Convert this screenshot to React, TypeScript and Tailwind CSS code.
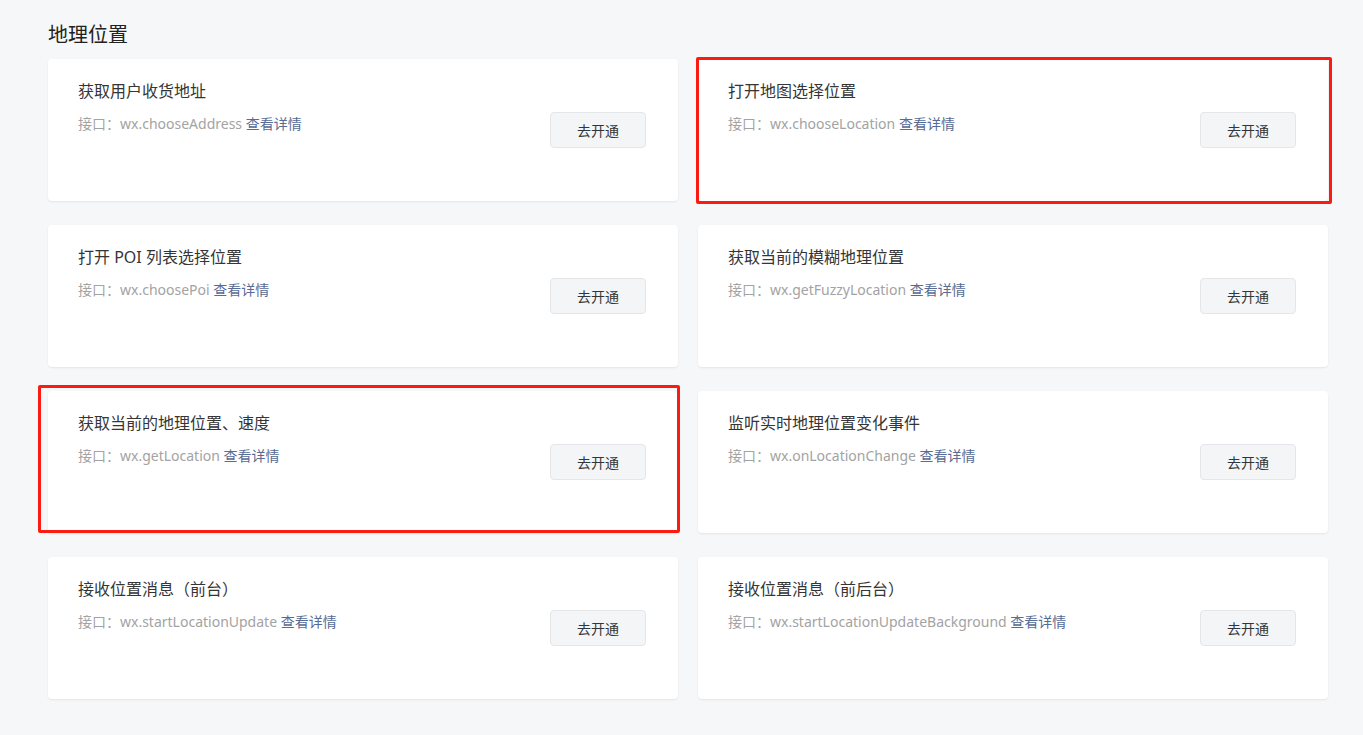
const font = { fontFamily: '"Noto Sans", "Noto Sans CJK SC", sans-serif' };

interface Api {
  title: string;
  api: string;
  mark?: "right" | "left";
}

const apis: Api[] = [
  { title: "获取用户收货地址", api: "wx.chooseAddress" },
  { title: "打开地图选择位置", api: "wx.chooseLocation", mark: "right" },
  { title: "打开 POI 列表选择位置", api: "wx.choosePoi" },
  { title: "获取当前的模糊地理位置", api: "wx.getFuzzyLocation" },
  { title: "获取当前的地理位置、速度", api: "wx.getLocation", mark: "left" },
  { title: "监听实时地理位置变化事件", api: "wx.onLocationChange" },
  { title: "接收位置消息（前台）", api: "wx.startLocationUpdate" },
  { title: "接收位置消息（前后台）", api: "wx.startLocationUpdateBackground" },
];

function ApiCard({ item }: { item: Api }) {
  return (
    <div className="relative flex h-[142px] justify-between rounded bg-white pl-[30px] pr-[32px] shadow-[0_1px_2px_rgba(0,0,0,0.08)]">
      <div className="pt-[20px]">
        <div className="text-[16px] leading-[24px] text-[#353535]">{item.title}</div>
        <div className="mt-[11px] text-[14px] leading-[20px] text-[#a3a3a3]">
          接口：{item.api} <span className="text-[#576b95]">查看详情</span>
        </div>
      </div>
      <button className="h-[36px] w-[96px] self-center rounded border border-[#e4e6ea] bg-[#f4f5f7] text-[14px] text-[#353535]">
        去开通
      </button>
      {item.mark === "right" && (
        <div className="pointer-events-none absolute -bottom-[3px] -left-[2px] -right-[4px] -top-[2px] rounded-[2px] border-[3px] border-[#fa1c12]" />
      )}
      {item.mark === "left" && (
        <div className="pointer-events-none absolute -left-[10px] -right-[2px] -top-[6px] bottom-0 rounded-[2px] border-[3px] border-[#fa1c12]" />
      )}
    </div>
  );
}

export default function App() {
  return (
    <div className="min-h-screen bg-[#f6f7f9] pl-[48px] pr-[35px] pt-[21px]" style={font}>
      <h2 className="text-[20px] leading-[28px] text-[#222]">地理位置</h2>
      <div className="mt-[10px] grid grid-cols-2 gap-x-5 gap-y-6">
        {apis.map((a) => (
          <ApiCard key={a.api} item={a} />
        ))}
      </div>
    </div>
  );
}
